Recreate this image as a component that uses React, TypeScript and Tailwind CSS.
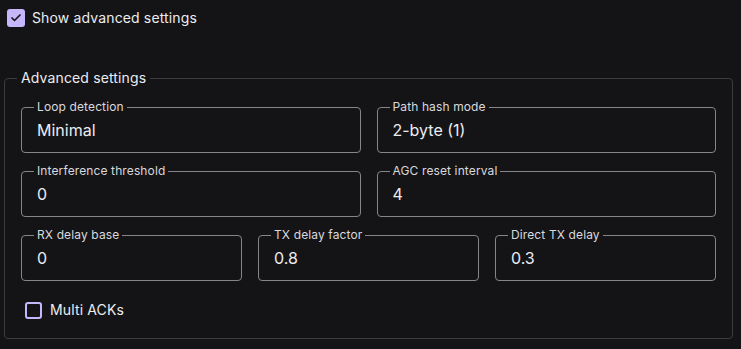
import React from 'react';
import { Check } from 'lucide-react';

interface FieldProps {
  label: string;
  value: string;
}

const Field: React.FC<FieldProps> = ({ label, value }) => (
  <fieldset className="min-w-0 rounded-[4px] border border-[#85858b] pl-3 pr-3 pt-[3px] pb-[10px]">
    <legend className="px-[3px] text-xs leading-4 tracking-[0.01em] text-[#d9d9de]">{label}</legend>
    <div className="pl-[3px] text-base leading-6 text-[#ececef]">{value}</div>
  </fieldset>
);

export default function App() {
  return (
    <div className="min-h-[349px] w-[741px] bg-[#141417] font-['Inter',sans-serif] pt-2">
      <label className="flex h-5 items-center pl-[7px]">
        <span className="flex h-[18px] w-[18px] items-center justify-center rounded-[3px] bg-[#c6b6fb]">
          <Check className="h-3 w-3 text-[#18181b]" strokeWidth={3.5} />
        </span>
        <span className="ml-[7px] text-sm leading-5 tracking-[0.01em] text-[#ececef]">Show advanced settings</span>
      </label>

      <fieldset className="ml-1 mt-10 w-[729px] rounded-[4px] border border-[#3b3b40] pl-4 pr-4 pt-[11px] pb-4">
        <legend className="-ml-1 px-1 text-sm leading-5 tracking-[0.01em] text-[#ececef]">Advanced settings</legend>

        <div className="flex flex-col gap-[10px]">
          <div className="grid grid-cols-2 gap-4">
            <Field label="Loop detection" value="Minimal" />
            <Field label="Path hash mode" value="2-byte (1)" />
          </div>
          <div className="grid grid-cols-2 gap-4">
            <Field label="Interference threshold" value="0" />
            <Field label="AGC reset interval" value="4" />
          </div>
          <div className="grid grid-cols-3 gap-4">
            <Field label="RX delay base" value="0" />
            <Field label="TX delay factor" value="0.8" />
            <Field label="Direct TX delay" value="0.3" />
          </div>
        </div>

        <label className="mt-[17px] flex h-6 items-center pl-1">
          <span className="h-[17px] w-[17px] rounded-[3px] border-2 border-[#c6b6fb]" />
          <span className="ml-2 text-sm leading-5 tracking-[0.01em] text-[#ececef]">Multi ACKs</span>
        </label>
      </fieldset>
    </div>
  );
}
